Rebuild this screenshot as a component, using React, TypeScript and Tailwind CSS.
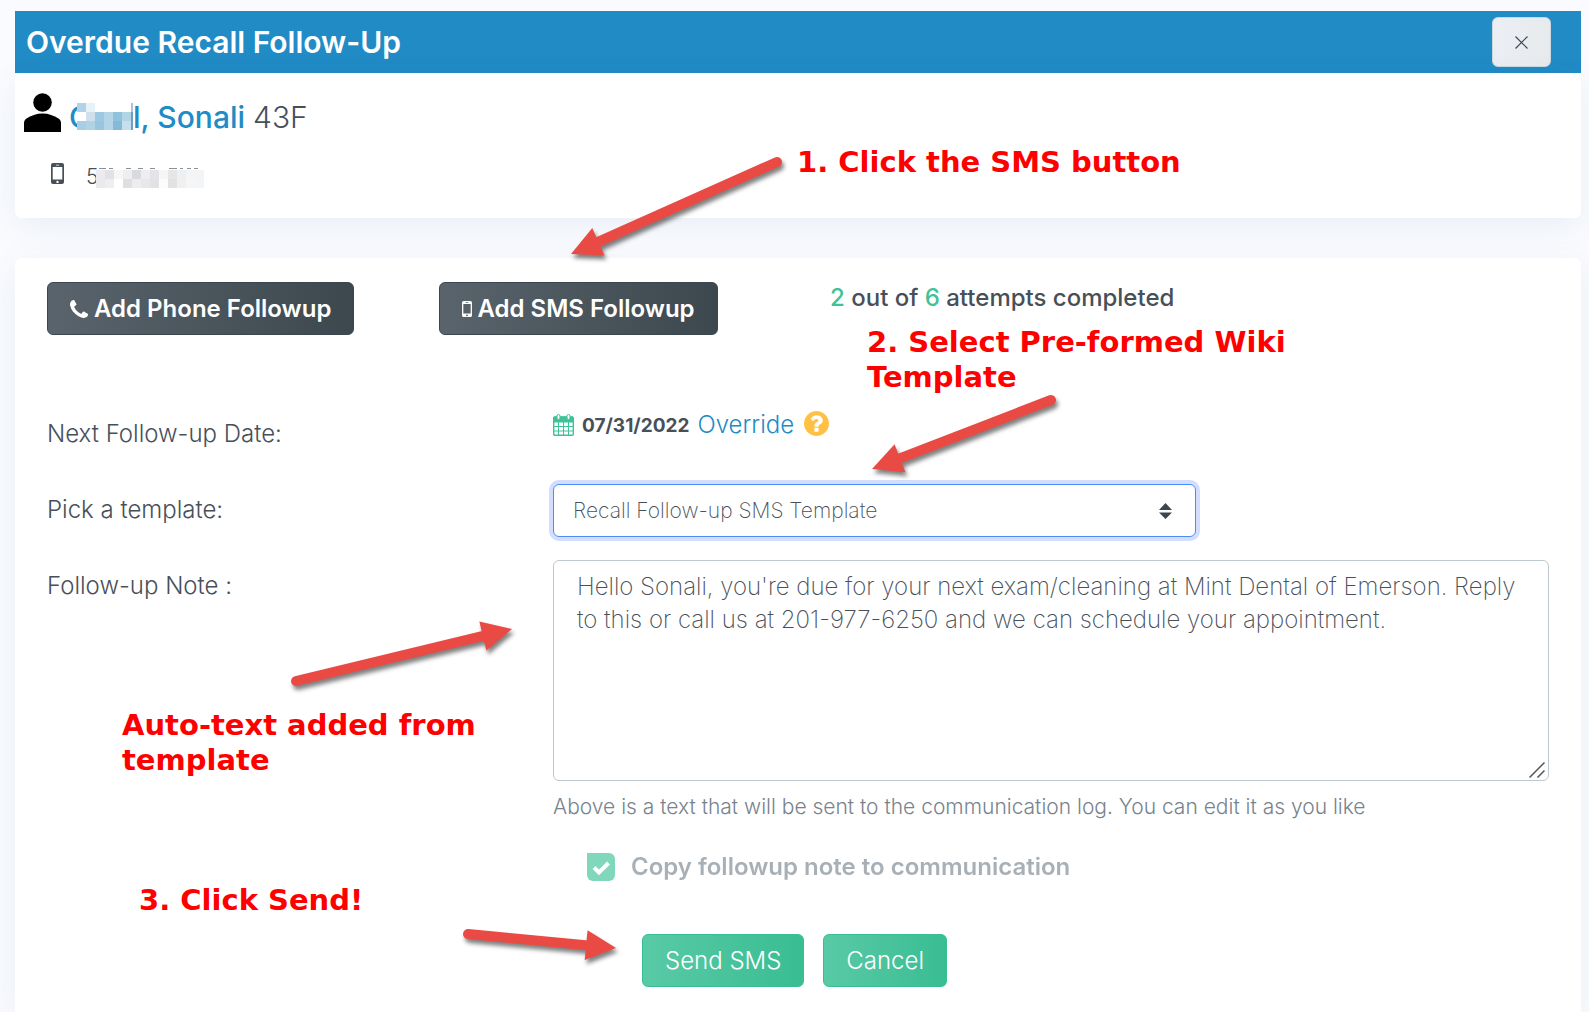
import { useState } from 'react';
import type { ReactNode } from 'react';

const DEFAULT_NOTE =
  "Hello Sonali, you're due for your next exam/cleaning at Mint Dental of Emerson. Reply to this or call us at 201-977-6250 and we can schedule your appointment.";

function PhoneIcon() {
  return (
    <svg viewBox="0 128 1408 1408" className="h-[18px] w-[18px]" fill="currentColor" aria-hidden="true">
      <path d="M1408 1240q0 27-10 70.5t-21 68.5q-21 50-122 106-94 51-186 51-27 0-53-3.5t-57.5-12.5-47-14.5-55.5-20.5-49-18q-98-35-175-83-127-79-264-216t-216-264q-48-77-83-175-3-9-18-49t-20.5-55.5-14.5-47-12.5-57.5-3.5-53q0-92 51-186 56-101 106-122 25-11 68.5-21t70.5-10q14 0 21 3 18 6 53 76 11 19 30 54t35 63.5 31 53.5q3 4 17.5 25t21.5 35.5 7 28.5q0 20-28.5 50t-62 55-62 53-28.5 46q0 9 5 22.5t8.5 20.5 14 24 11.5 19q76 137 174 235t235 174q2 1 19 11.5t24 14 20.5 8.5 22.5 5q18 0 46-28.5t53-62 55-62 50-28.5q14 0 28.5 7t35.5 21.5 25 17.5q25 15 53.5 31t63.5 35 54 30q70 35 76 53 3 7 3 21z" />
    </svg>
  );
}

function MobileIcon({ className }: { className: string }) {
  return (
    <svg viewBox="0 0 13 21" className={className} fill="currentColor" aria-hidden="true">
      <path
        fillRule="evenodd"
        d="M2 0h9a2 2 0 0 1 2 2v17a2 2 0 0 1-2 2H2a2 2 0 0 1-2-2V2a2 2 0 0 1 2-2zM1.700 4v12.500h9.600V4zM4.800 1.700v.8h3.400v-.8zM6.500 17.700a1.200 1.200 0 1 0 0 2.400 1.200 1.200 0 0 0 0-2.400z"
      />
    </svg>
  );
}

function CalendarIcon() {
  return (
    <svg viewBox="0 0 21 22" className="h-[22px] w-[21px] text-[#3fc297]" fill="none" stroke="currentColor" aria-hidden="true">
      <path d="M1 3h19v5H1z" fill="currentColor" />
      <rect x="0.700" y="3" width="19.600" height="18.300" rx="1" strokeWidth="1.400" />
      <path d="M5.500 8v13M10.500 8v13M15.500 8v13M1 12.500h19M1 17h19" strokeWidth="1" />
      <rect x="4" y="0.500" width="3" height="5" rx="1.500" fill="#fff" strokeWidth="1" />
      <rect x="14" y="0.500" width="3" height="5" rx="1.500" fill="#fff" strokeWidth="1" />
    </svg>
  );
}

function HelpIcon() {
  return (
    <svg viewBox="128 128 1536 1536" className="h-[25px] w-[25px]" fill="#ffc043" aria-hidden="true">
      <path d="M1024 1376v-192q0-14-9-23t-23-9h-192q-14 0-23 9t-9 23v192q0 14 9 23t23 9h192q14 0 23-9t9-23zm256-672q0-88-55.500-163t-138.500-116-170-41q-243 0-371 213-15 24 8 42l132 100q7 6 19 6 16 0 25-12 53-68 86-92 34-24 86-24 48 0 85.500 26t37.500 59q0 38-20 61t-68 45q-63 28-115.500 86.500t-52.500 125.500v36q0 14 9 23t23 9h192q14 0 23-9t9-23q0-19 21.500-49.500t54.500-49.500q32-18 49-28.500t46-35 44.500-48 28-60.500 12.500-81zm384 192q0 209-103 385.500t-279.500 279.500-385.500 103-385.500-103-279.500-279.500-103-385.500 103-385.500 279.500-279.500 385.500-103 385.500 103 279.500 279.500 103 385.500z" />
    </svg>
  );
}

function PersonIcon() {
  return (
    <svg viewBox="0 0 37 39" className="h-[39px] w-[37px] shrink-0" aria-hidden="true">
      <circle cx="18.500" cy="9.500" r="9.300" />
      <path d="M0 39V30c0-2 1-3.500 2.500-4.500C7 22.500 12.500 20.500 18.500 20.500s11.500 2 16 5c1.500 1 2.500 2.500 2.500 4.500v9z" />
    </svg>
  );
}

// Masked parts of the patient's details: 9px blocks, '' leaves a gap
const NAME_BLOCKS = [
  ['#b0d3e8', '#e6f2f8', '', '', '', ''],
  ['#ffffff', '#d0dfec', '#9ec8e1', '#b4d4e8', '#90c1dd', '#b0d6e6'],
  ['#a8cde5', '#b0d2e6', '#98c6e1', '#b4d4e9', '#84b9da', '#c5e0ec'],
];
const PHONE_BLOCKS = [
  ['#ececee', '#e0e2e6', '#f5f6f6', '#eeeeee', '#d8dadf', '#eeeef0', '#e4e4e8', '#f5f7f7', '#e6e6e6', '#eeeff1', '#f3f4f5', '#f3f4f5'],
  ['#e9eaeb', '#eeeef0', '', '#dfdfe0', '#ededef', '#e8e8eb', '#e2e2e6', '#fbfdfc', '#e2e2e3', '#f0f0f1', '#f5f6f7', '#f3f5f6'],
];

function Blocks({ rows }: { rows: string[][] }) {
  return (
    <>
      {rows.map((row, y) =>
        row.map((fill, x) => fill && <rect key={`${x}-${y}`} x={x * 9} y={y * 9} width="9" height="9" fill={fill} />),
      )}
    </>
  );
}

interface FormRowProps {
  label: string;
  htmlFor?: string;
  children: ReactNode;
}

function FormRow({ label, htmlFor, children }: FormRowProps) {
  return (
    <div className="grid grid-cols-3">
      <label htmlFor={htmlFor} className="px-2 pt-2.5 leading-8">
        {label}
      </label>
      <div className="col-span-2 px-2">{children}</div>
    </div>
  );
}

interface ArrowProps {
  from: [number, number];
  to: [number, number];
}

function Arrow({ from, to }: ArrowProps) {
  const length = Math.hypot(to[0] - from[0], to[1] - from[1]);
  const angle = (Math.atan2(to[1] - from[1], to[0] - from[0]) * 180) / Math.PI;
  return (
    <g transform={`translate(${from[0]} ${from[1]}) rotate(${angle})`}>
      <line x1="0" y1="0" x2={length - 20} y2="0" stroke="#e94b44" strokeWidth="10" strokeLinecap="round" />
      <polygon points={`${length},0 ${length - 30},-15 ${length - 30},15`} fill="#e94b44" />
    </g>
  );
}

function Callout({ className, children }: { className: string; children: ReactNode }) {
  return (
    <p
      className={`absolute font-['DejaVu_Sans',sans-serif] text-[29px] leading-[35px] font-bold text-[#ff0000] ${className}`}
    >
      {children}
    </p>
  );
}

const darkButton =
  'inline-flex h-[53px] items-center gap-1.5 rounded-md border border-[#3b474f] bg-linear-to-r from-[#5a646c] to-[#3c474e] px-[22px] font-semibold whitespace-nowrap text-white';
const greenButton =
  'h-[53px] rounded-md border border-[#39bd92] bg-linear-to-r from-[#58caa6] to-[#39bd92] px-[22px] text-white';

export default function App() {
  const [template, setTemplate] = useState('recall');
  const [note, setNote] = useState(DEFAULT_NOTE);

  return (
    <div className="relative flex min-h-screen flex-col overflow-hidden bg-[#fafbfe] pt-[11px] pr-2 pl-[15px] font-['Inter',sans-serif] text-2xl font-light text-[#475059]">
      <header className="flex h-[62px] items-center justify-between bg-[#218bc5] pr-[30px] pl-[11px]">
        <h1 className="text-3xl font-semibold text-white">Overdue Recall Follow-Up</h1>
        <button
          type="button"
          aria-label="Close"
          className="flex h-[50px] w-[59px] items-center justify-center rounded-md border border-[#cdd6dc] bg-linear-to-r from-[#ebeef3] to-[#e7ebed]"
        >
          <svg viewBox="0 0 13 13" className="h-[13px] w-[13px]" stroke="#3f4754" strokeWidth="1.200" aria-hidden="true">
            <path d="M0.500 0.500l12 12M12.500 0.500l-12 12" />
          </svg>
        </button>
      </header>

      <section className="h-[145px] rounded-md bg-white px-[9px] pt-5 shadow-[0_8px_32px_rgba(40,90,150,0.08)]">
        <div className="flex items-start gap-2">
          <PersonIcon />
          <p className="flex pt-1 text-3xl leading-10">
            <a href="#patient" className="flex font-medium text-[#218bc5]">
              <span>C</span>
              <svg viewBox="0 0 56 27" className="mt-1.5 -ml-3.5 h-[27px] w-14" shapeRendering="crispEdges" aria-hidden="true">
                <Blocks rows={NAME_BLOCKS} />
                <rect x="54" width="2" height="9" fill="#a9c3dd" />
                <rect x="54" y="9" width="2" height="18" fill="#6d9fc5" />
              </svg>
              <span>l, Sonali</span>
            </a>
            <span className="ml-2">43F</span>
          </p>
        </div>
        <div className="mt-[26px] flex items-start gap-[22px] pl-[27px] text-[21px] leading-7">
          <MobileIcon className="h-[21px] w-[13px]" />
          <p className="flex items-center">
            <span>5</span>
            <svg viewBox="0 -3 108 21" className="-ml-0.5 h-[21px] w-[108px]" shapeRendering="crispEdges" aria-hidden="true">
              <path
                d="M3 -2h7M13 -2h4M30 -2h5M42 -2h5M54 -2h5M73 -2h8M84 -2h3M91 -2h4M98 -2h4"
                stroke="#8b9096"
                strokeWidth="1"
              />
              <Blocks rows={PHONE_BLOCKS} />
            </svg>
          </p>
        </div>
      </section>

      <main className="mt-10 grow rounded-t-md bg-white pt-6 pb-6 shadow-[0_8px_32px_rgba(40,90,150,0.08)]">
        <div className="grid grid-cols-4">
          <div className="px-8">
            <button type="button" className={darkButton}>
              <PhoneIcon />
              Add Phone Followup
            </button>
          </div>
          <div className="px-8">
            <button type="button" className={darkButton}>
              <MobileIcon className="h-4 w-2.5" />
              Add SMS Followup
            </button>
          </div>
          <p className="col-span-2 px-8 leading-8 font-medium">
            <span className="text-[#3fc297]">2</span> out of <span className="text-[#3fc297]">6</span> attempts completed
          </p>
        </div>

        <form className="mt-[73px] px-6" onSubmit={(e) => e.preventDefault()}>
          <FormRow label="Next Follow-up Date:">
            <div className="flex h-[76px] items-start leading-8">
              <div className="flex items-center">
                <CalendarIcon />
                <strong className="mt-0.5 ml-2 text-[19px] font-bold">07/31/2022</strong>
                <a href="#override" className="ml-2 text-[#218bc5]">
                  Override
                </a>
                <button type="button" aria-label="Help" className="mb-1 ml-2.5">
                  <HelpIcon />
                </button>
              </div>
            </div>
          </FormRow>

          <FormRow label="Pick a template:" htmlFor="template">
            <div className="relative w-[643px] max-w-full">
              <select
                id="template"
                value={template}
                onChange={(e) => setTemplate(e.target.value)}
                className="h-[53px] w-full appearance-none rounded-md border border-[#4b8df8] bg-white pr-12 pl-[19px] text-[21px] font-extralight ring-4 ring-[#d3ddfd] outline-none"
              >
                <option value="recall">Recall Follow-up SMS Template</option>
                <option value="none">No template</option>
              </select>
              <svg
                viewBox="0 0 13 16"
                className="pointer-events-none absolute top-[19px] right-6 h-4 w-[13px]"
                fill="#3b474f"
                aria-hidden="true"
              >
                <path d="M6.500 0L13 7H0zM6.500 16L0 9.500h13z" />
              </svg>
            </div>
          </FormRow>

          <div className="mt-[23px]">
            <FormRow label="Follow-up Note :" htmlFor="note">
              <div className="relative">
                <textarea
                  id="note"
                  value={note}
                  onChange={(e) => setNote(e.target.value)}
                  className="block h-[221px] w-full resize-none rounded-md border border-[#bdc9d0] bg-white px-[23px] py-[9px] leading-[33px] font-extralight"
                />
                <svg
                  viewBox="0 0 16 16"
                  className="pointer-events-none absolute right-1 bottom-[3px] h-4 w-4"
                  stroke="#555"
                  strokeWidth="1.500"
                  aria-hidden="true"
                >
                  <path d="M0.500 15.500l15-15M8.500 15.500l7-7" />
                </svg>
              </div>
              <p className="mt-3 text-[21px] leading-7 text-[#78838d]">
                Above is a text that will be sent to the communication log. You can edit it as you like
              </p>
              <div className="mt-[30px] flex items-center pl-[34px] opacity-65">
                <div className="relative h-7 w-7">
                  <input
                    id="copy-note"
                    type="checkbox"
                    defaultChecked
                    disabled
                    className="block h-7 w-7 appearance-none rounded-r-md rounded-bl-md bg-[#3fc297]"
                  />
                  <svg
                    viewBox="0 0 28 28"
                    className="pointer-events-none absolute inset-0"
                    fill="none"
                    stroke="#fff"
                    strokeWidth="4"
                    aria-hidden="true"
                  >
                    <path d="M7 14.500l5 5L21.500 10" />
                  </svg>
                </div>
                <label htmlFor="copy-note" className="ml-4 leading-8 font-semibold text-[#7b8791]">
                  Copy followup note to communication
                </label>
              </div>
              <div className="mt-[51px] flex gap-[19px] pl-[89px]">
                <button type="submit" className={greenButton}>
                  Send SMS
                </button>
                <button type="button" className={greenButton}>
                  Cancel
                </button>
              </div>
            </FormRow>
          </div>
        </form>
      </main>

      {/* Walkthrough callouts drawn over the form */}
      <div className="pointer-events-none absolute top-0 left-0">
        <svg
          width="1589"
          height="1012"
          viewBox="0 0 1589 1012"
          className="max-w-none drop-shadow-[2px_4px_2px_rgba(0,0,0,0.5)]"
          aria-hidden="true"
        >
          <Arrow from={[777, 162]} to={[571, 254]} />
          <Arrow from={[1051, 400]} to={[872, 469]} />
          <Arrow from={[296, 681]} to={[512, 629]} />
          <Arrow from={[468, 934]} to={[616, 948]} />
        </svg>
        <Callout className="top-[145px] left-[797px] whitespace-nowrap">1. Click the SMS button</Callout>
        <Callout className="top-[325px] left-[867px] w-[440px]">2. Select Pre-formed Wiki Template</Callout>
        <Callout className="top-[708px] left-[122px] w-[370px]">Auto-text added from template</Callout>
        <Callout className="top-[883px] left-[139px] whitespace-nowrap">3. Click Send!</Callout>
      </div>
    </div>
  );
}
